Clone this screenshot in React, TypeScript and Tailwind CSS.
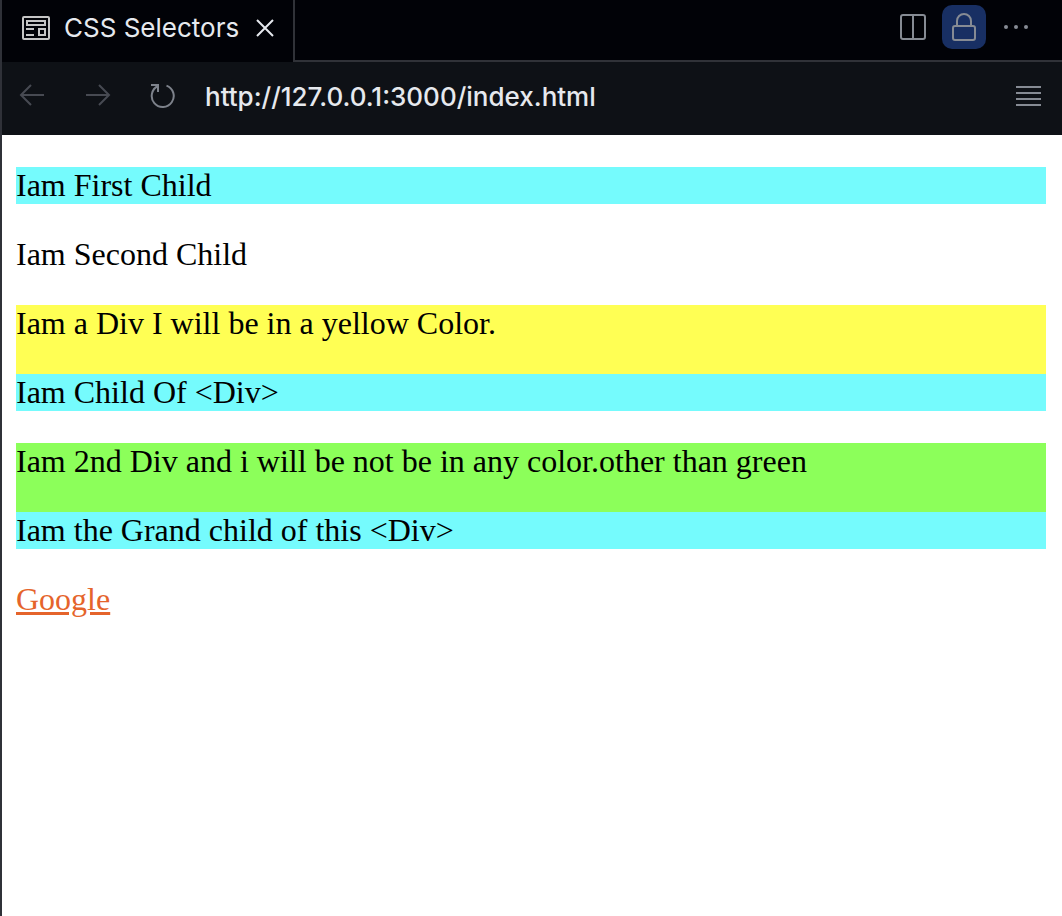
import type { ReactNode } from "react";

function IconButton({ label, className, children }: { label: string; className: string; children: ReactNode }) {
  return (
    <button type="button" aria-label={label} className={`flex shrink-0 items-center justify-center ${className}`}>
      {children}
    </button>
  );
}

function TabBar() {
  return (
    <header className="flex h-[62px] bg-[#010207]">
      <div className="flex w-[293px] shrink-0 items-center border-r-2 border-[#303238] pb-[7px] pl-5">
        <svg width="28" height="24" viewBox="0 0 28 24" fill="none" stroke="#c5c5c5" strokeWidth="2" aria-hidden="true">
          <rect x="1" y="1" width="26" height="22" rx="1" />
          <path d="M5 5h18v4H5zM4 13h8M4 19h8M17 13h6v6h-6z" />
        </svg>
        <span className="ml-[14px] whitespace-nowrap font-['Inter',sans-serif] text-[26px] leading-8 text-[#e6e9ee]">
          CSS Selectors
        </span>
        <IconButton label="Close tab" className="ml-auto mr-[18px] h-8 w-5 text-[#e6e9ee]">
          <svg width="18" height="18" viewBox="0 0 18 18" fill="none" stroke="currentColor" strokeWidth="2">
            <path d="M1 1l16 16M17 1L1 17" />
          </svg>
        </IconButton>
      </div>
      <div className="flex flex-1 items-center justify-end border-b-2 border-[#303238] pb-[6px] pr-8 text-[#868b94]">
        <IconButton label="Split editor" className="h-[42px] w-[42px]">
          <svg width="26" height="26" viewBox="0 0 26 26" fill="none" stroke="currentColor" strokeWidth="2">
            <rect x="1" y="1" width="24" height="24" rx="2" />
            <path d="M13 1v24" />
          </svg>
        </IconButton>
        <IconButton label="Lock group" className="ml-2 h-11 w-11 rounded-[10px] bg-[#182f63]">
          <svg width="24" height="28" viewBox="0 0 24 28" fill="none" stroke="currentColor" strokeWidth="2">
            <rect x="1" y="13" width="22" height="14" rx="2" />
            <path d="M5 13V8a7 7 0 0 1 14 0v5" />
          </svg>
        </IconButton>
        <IconButton label="More actions" className="ml-4 h-11 w-7">
          <svg width="24" height="4" viewBox="0 0 24 4" fill="currentColor">
            <circle cx="2" cy="2" r="2" />
            <circle cx="12" cy="2" r="2" />
            <circle cx="22" cy="2" r="2" />
          </svg>
        </IconButton>
      </div>
    </header>
  );
}

function AddressBar() {
  return (
    <nav className="flex h-[73px] items-center pb-[5px] pl-[14px] pr-[17px]">
      <IconButton label="Back" className="h-8 w-8 text-[#474a52]">
        <svg width="26" height="24" viewBox="0 0 26 24" fill="none" stroke="currentColor" strokeWidth="2">
          <path d="M25 11H2M12 1L2 11l10 10" />
        </svg>
      </IconButton>
      <IconButton label="Forward" className="ml-[34px] h-8 w-8 text-[#474a52]">
        <svg width="26" height="24" viewBox="0 0 26 24" fill="none" stroke="currentColor" strokeWidth="2">
          <path d="M1 11h23M14 1l10 10-10 10" />
        </svg>
      </IconButton>
      <IconButton label="Reload" className="ml-[33px] h-8 w-8 text-[#7d828b]">
        <svg width="26" height="26" viewBox="0 0 26 26" fill="none" stroke="currentColor" strokeWidth="2">
          <path d="M1 2h7v7M8 3A11 11 0 1 0 16.500 2.600" />
        </svg>
      </IconButton>
      <input
        aria-label="Address"
        type="text"
        defaultValue="http://127.0.0.1:3000/index.html"
        className="ml-[26px] h-10 min-w-0 flex-1 bg-transparent font-['Inter',sans-serif] text-[26px] font-medium leading-8 text-[#e6e9ee] outline-none"
      />
      <IconButton label="Menu" className="h-8 w-8 text-[#868b94]">
        <svg width="26" height="20" viewBox="0 0 26 20" fill="none" stroke="currentColor" strokeWidth="2">
          <path d="M0 1h25M0 7h25M0 13h25M0 19h25" />
        </svg>
      </IconButton>
    </nav>
  );
}

export default function App() {
  return (
    <div className="flex min-h-screen flex-col border-l-2 border-[#2f3138] bg-[#0e1116]">
      <TabBar />
      <AddressBar />
      <main className="flex flex-1 flex-col gap-8 bg-white py-8 pl-[14px] pr-4 font-['Liberation_Serif',serif] text-[32px] leading-[37px] text-black">
        <p className="bg-[#75fbfd]">Iam First Child</p>
        <p>Iam Second Child</p>
        <div className="bg-[#ffff54]">
          Iam a Div I will be in a yellow Color.
          <p className="mt-8 bg-[#75fbfd]">Iam Child Of &lt;Div&gt;</p>
        </div>
        <div className="bg-[#8cff5a]">
          Iam 2nd Div and i will be not be in any color.other than green
          <p className="mt-8 bg-[#75fbfd]">Iam the Grand child of this &lt;Div&gt;</p>
        </div>
        <a href="https://www.google.com" className="self-start text-[#e5642b] underline decoration-[3px]">
          Google
        </a>
      </main>
    </div>
  );
}
